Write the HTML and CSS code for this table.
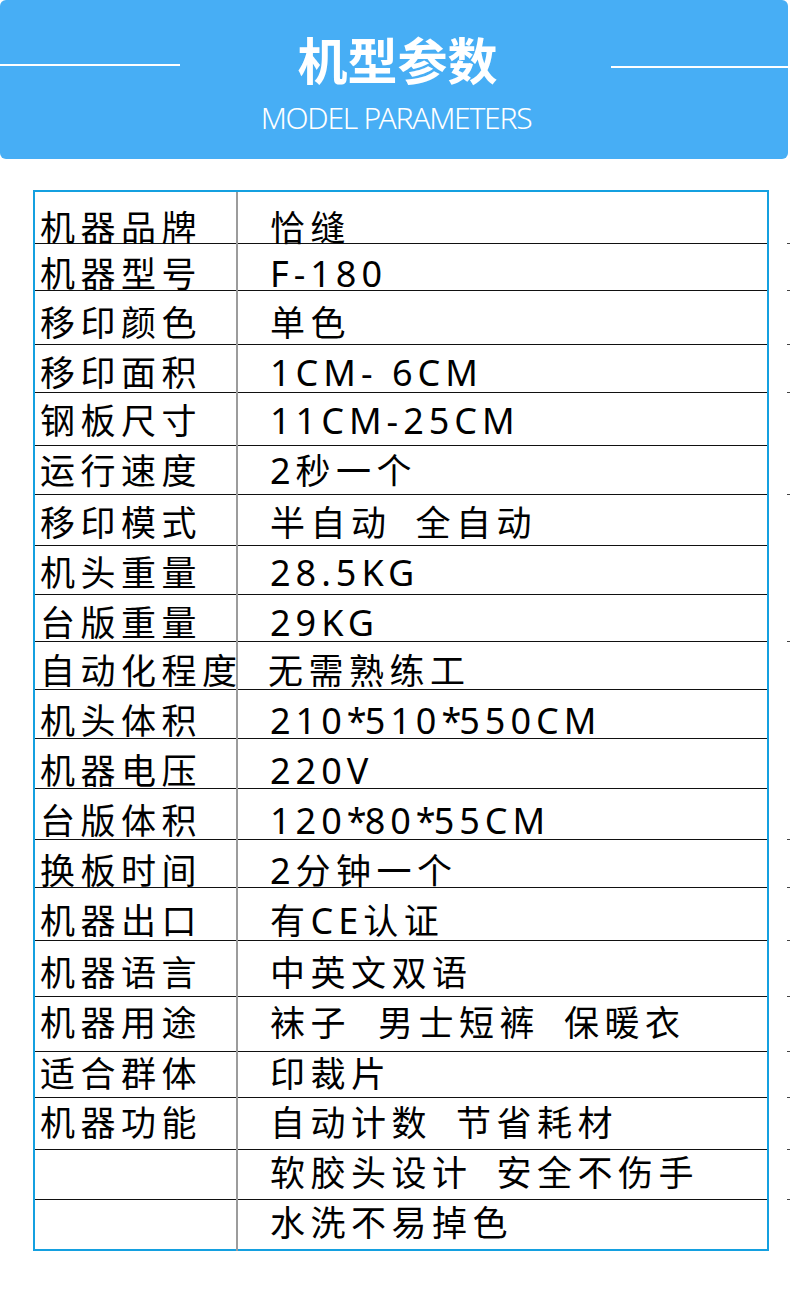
FILE: index.html
```html
<!DOCTYPE html>
<html lang="zh-CN">
<head>
<meta charset="utf-8">
<title>机型参数</title>
<link rel="stylesheet" href="styles.css">
</head>
<body>
<div class="header">
  <div class="title-row">
    <span class="rule rule-l"></span>
    <h1 class="title">机型参数</h1>
    <span class="rule rule-r"></span>
  </div>
  <p class="subtitle">MODEL PARAMETERS</p>
</div>

<div class="table">
  <div class="row t"><div class="k">机器品牌</div><div class="v">恰缝</div></div>
  <div class="row t"><div class="k">机器型号</div><div class="v"><span class="en">F-180</span></div></div>
  <div class="row t"><div class="k">移印颜色</div><div class="v">单色</div></div>
  <div class="row t"><div class="k">移印面积</div><div class="v"><span class="en">1CM- 6CM</span></div></div>
  <div class="row"><div class="k">钢板尺寸</div><div class="v"><span class="en">11CM-25CM</span></div></div>
  <div class="row t"><div class="k">运行速度</div><div class="v"><span class="en">2</span>秒一个</div></div>
  <div class="row"><div class="k">移印模式</div><div class="v">半自动<span class="gap"></span>全自动</div></div>
  <div class="row"><div class="k">机头重量</div><div class="v"><span class="en">28.5KG</span></div></div>
  <div class="row t"><div class="k">台版重量</div><div class="v"><span class="en">29KG</span></div></div>
  <div class="row"><div class="k">自动化程度</div><div class="v v-tight">无需熟练工</div></div>
  <div class="row"><div class="k">机头体积</div><div class="v"><span class="en">210<span class="ast">*</span>510<span class="ast">*</span>550CM</span></div></div>
  <div class="row"><div class="k">机器电压</div><div class="v"><span class="en">220V</span></div></div>
  <div class="row t"><div class="k">台版体积</div><div class="v"><span class="en">120<span class="ast">*</span>80<span class="ast">*</span>55CM</span></div></div>
  <div class="row t"><div class="k">换板时间</div><div class="v"><span class="en">2</span>分钟一个</div></div>
  <div class="row t"><div class="k">机器出口</div><div class="v">有<span class="en">CE</span>认证</div></div>
  <div class="row t"><div class="k">机器语言</div><div class="v">中英文双语</div></div>
  <div class="row t"><div class="k">机器用途</div><div class="v">袜子<span class="gap gap-w"></span>男士短裤<span class="gap"></span>保暖衣</div></div>
  <div class="row t"><div class="k">适合群体</div><div class="v">印裁片</div></div>
  <div class="row t"><div class="k">机器功能</div><div class="v">自动计数<span class="gap"></span>节省耗材</div></div>
  <div class="row t"><div class="k"></div><div class="v">软胶头设计<span class="gap"></span>安全不伤手</div></div>
  <div class="row"><div class="k"></div><div class="v">水洗不易掉色</div></div>
</div>
</body>
</html>
```

FILE: styles.css
```css
* {
  box-sizing: border-box;
}

html, body {
  margin: 0;
  padding: 0;
  background: #ffffff;
}

body {
  width: 790px;
  font-family: "Noto Sans CJK SC", "Noto Sans", sans-serif;
  color: #000;
}

/* ---------- header ---------- */
.header {
  width: 788px;
  height: 159px;
  background: #47aef5;
  border-radius: 6px;
  padding-top: 33px;
  color: #fff;
}

.title-row {
  display: flex;
  align-items: flex-start;
  height: 50px;
}

.rule {
  display: block;
  height: 2px;
  background: #ffffff;
}

.rule-l {
  width: 180px;
  margin-top: 31px;
}

.rule-r {
  width: 177px;
  margin-top: 33px;
}

.title {
  flex: 1;
  margin: 0;
  text-align: center;
  font-family: "Noto Sans CJK SC", sans-serif;
  font-weight: 700;
  font-size: 50px;
  line-height: 50px;
  padding-left: 4px;
}

.subtitle {
  margin: 20px 0 0;
  text-align: center;
  font-family: "Noto Sans", sans-serif;
  font-weight: 300;
  font-size: 30px;
  line-height: 30px;
  letter-spacing: -1.25px;
  padding-left: 4px;
}

/* ---------- table ---------- */
.table {
  position: relative;
  margin: 31px 0 0 33px;
  width: 736px;
  border: 2px solid #14a0e0;
}

.table::before {
  content: "";
  position: absolute;
  left: 201px;
  top: 0;
  bottom: -5px;
  width: 2px;
  background: #9c9c9c;
  z-index: 2;
}

.row {
  position: relative;
  display: flex;
  align-items: flex-start;
  border-bottom: 1px solid #111;
  font-size: 35px;
  line-height: 35px;
  letter-spacing: 5.5px;
  white-space: nowrap;
}

.row:last-child {
  border-bottom: none;
}

.row.t::after {
  content: "";
  position: absolute;
  right: -23px;
  bottom: -1px;
  width: 3px;
  height: 1px;
  background: #444;
}

.k {
  width: 203px;
  flex: none;
  padding-left: 5px;
}

.v {
  flex: 1;
  padding-left: 32px;
}

.v-tight {
  padding-left: 30px;
}

.en {
  font-family: "Noto Sans", sans-serif;
  font-size: 36px;
  letter-spacing: 5px;
}

.ast {
  letter-spacing: -2px;
}

.gap {
  display: inline-block;
  width: 24px;
}

.gap-w {
  width: 27px;
}

.row:nth-child(1)  { height: 52px; padding-top: 16px; }
.row:nth-child(2)  { height: 47px; padding-top: 10px; }
.row:nth-child(3)  { height: 54px; padding-top: 12px; }
.row:nth-child(4)  { height: 48px; padding-top: 8px; }
.row:nth-child(5)  { height: 53px; padding-top: 8px; }
.row:nth-child(6)  { height: 49px; padding-top: 5px; }
.row:nth-child(7)  { height: 51px; padding-top: 8px; }
.row:nth-child(8)  { height: 49px; padding-top: 7px; }
.row:nth-child(9)  { height: 47px; padding-top: 8px; }
.row:nth-child(10) { height: 48px; padding-top: 9px; }
.row:nth-child(11) { height: 49px; padding-top: 11px; }
.row:nth-child(12) { height: 50px; padding-top: 12px; }
.row:nth-child(13) { height: 51px; padding-top: 12px; }
.row:nth-child(14) { height: 48px; padding-top: 11px; }
.row:nth-child(15) { height: 53px; padding-top: 13px; }
.row:nth-child(16) { height: 56px; padding-top: 12px; }
.row:nth-child(17) { height: 55px; padding-top: 6px; }
.row:nth-child(18) { height: 46px; padding-top: 2px; }
.row:nth-child(19) { height: 52px; padding-top: 5px; }
.row:nth-child(20) { height: 50px; padding-top: 3px; }
.row:nth-child(21) { height: 49px; padding-top: 3px; }
```
